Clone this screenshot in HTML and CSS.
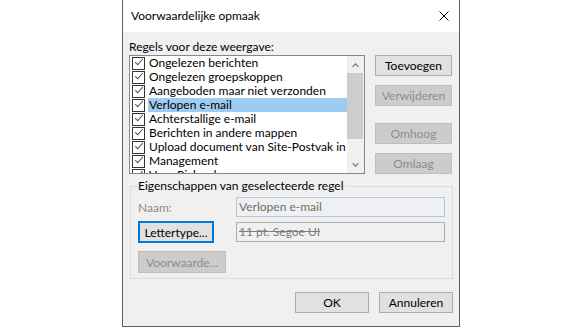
FILE: index.html
```html
<!DOCTYPE html>
<html lang="nl">
    <head>
        <meta charset="UTF-8">
        <meta name="viewport" content="width=device-width, initial-scale=1.0">
        <title>Voorwaardelijke opmaak</title>
        <link rel="stylesheet" href="styles.css">
    </head>
    <body>
        <div class="dialog">
            <div class="titlebar">
                <span class="title">Voorwaardelijke opmaak</span>
                <span class="close">
                    <svg width="10" height="10" viewBox="0 0 10 10">
                        <path d="M0.5 0.5 L9.5 9.5 M9.5 0.5 L0.5 9.5" stroke="#111" stroke-width="1" fill="none"/>
                    </svg>
                </span>
            </div>
            <div class="content">
                <div class="label">Regels voor deze weergave:</div>
                <div class="rules">
                    <div class="listbox">
                        <!-- One row for each rule in the view -->
                        <ul class="items">
                            <li class="item"><span class="check"></span><span class="name">Ongelezen berichten</span></li>
                            <li class="item"><span class="check"></span><span class="name">Ongelezen groepskoppen</span></li>
                            <li class="item"><span class="check"></span><span class="name">Aangeboden maar niet verzonden</span></li>
                            <li class="item selected"><span class="check"></span><span class="name">Verlopen e-mail</span></li>
                            <li class="item"><span class="check"></span><span class="name">Achterstallige e-mail</span></li>
                            <li class="item"><span class="check"></span><span class="name">Berichten in andere mappen</span></li>
                            <li class="item"><span class="check"></span><span class="name">Upload document van Site-Postvak in Postvak IN</span></li>
                            <li class="item"><span class="check"></span><span class="name">Management</span></li>
                            <li class="item"><span class="check"></span><span class="name">Voor Richard</span></li>
                        </ul>
                        <div class="scrollbar">
                            <div class="arrow">
                                <svg width="7" height="4" viewBox="0 0 7 4"><path d="M0 4 L3.5 0 L7 4 L5.8 4 L3.5 1.4 L1.2 4 Z" fill="#606060"/></svg>
                            </div>
                            <div class="track"><div class="thumb"></div></div>
                            <div class="arrow">
                                <svg width="7" height="4" viewBox="0 0 7 4"><path d="M0 0 L3.5 4 L7 0 L5.8 0 L3.5 2.6 L1.2 0 Z" fill="#606060"/></svg>
                            </div>
                        </div>
                    </div>
                    <div class="side-buttons">
                        <button class="btn">Toevoegen</button>
                        <button class="btn" disabled>Verwijderen</button>
                        <button class="btn move" disabled>Omhoog</button>
                        <button class="btn" disabled>Omlaag</button>
                    </div>
                </div>

                <fieldset class="group">
                    <legend>Eigenschappen van geselecteerde regel</legend>
                    <div class="field-row">
                        <span class="field-label">Naam:</span>
                        <span class="textbox">Verlopen e-mail</span>
                    </div>
                    <div class="field-row">
                        <button class="btn font-btn focused">Lettertype...</button>
                        <span class="preview">11 pt. Segoe UI</span>
                    </div>
                    <div class="field-row condition">
                        <button class="btn condition-btn" disabled>Voorwaarde...</button>
                    </div>
                </fieldset>

                <div class="footer">
                    <button class="btn footer-btn">OK</button>
                    <button class="btn footer-btn">Annuleren</button>
                </div>
            </div>
        </div>
    </body>
</html>
```

FILE: styles.css
```css
/* Page and font */
body {
    margin: 0;
    background-color: #fff;
    font-family: Lato, "Noto Sans", sans-serif;
    font-size: 12px;
    color: #000;
}

/* The dialog window */
.dialog {
    width: 338px;
    height: 327px;
    margin-left: 122px;
    box-sizing: border-box;
    border: 1px solid #5f5f5f;
    border-top: none;
    background-color: #f0f0f0;
    display: flex;
    flex-direction: column;
}

/* Title bar */
.titlebar {
    height: 32px;
    background-color: #fff;
    display: flex;
    justify-content: space-between;
    align-items: flex-start;
}

.title {
    padding: 8px 0 0 8px;
    line-height: 16px;
}

.close {
    display: flex;
    padding: 11px 10px 0 0;
}

/* Main content */
.content {
    padding: 0 6px;
}

.label {
    margin-top: 7px;
    line-height: 16px;
}

.rules {
    display: flex;
    gap: 10px;
}

/* Rules list */
.listbox {
    width: 236px;
    height: 119px;
    box-sizing: border-box;
    border: 1px solid #828790;
    background-color: #fff;
    display: flex;
    overflow: hidden;
}

.items {
    flex: 1;
    margin: 0;
    padding: 0;
    list-style: none;
    overflow: hidden;
    min-width: 0;
}

.item {
    height: 14px;
    display: flex;
    align-items: center;
    white-space: nowrap;
}

.check {
    position: relative;
    flex: none;
    width: 13px;
    height: 13px;
    box-sizing: border-box;
    margin-left: 2px;
    margin-right: 3px;
    border: 1px solid #333;
    background-color: #fff;
}

.check::after {
    content: "";
    position: absolute;
    left: 2px;
    top: 1px;
    width: 7px;
    height: 3px;
    border-left: 1px solid #444;
    border-bottom: 1px solid #444;
    transform: rotate(-48deg);
}

.name {
    flex: 1;
    padding-left: 1px;
    line-height: 14px;
    overflow: hidden;
}

.item.selected .name {
    background-color: #9dcbf1;
}

/* Scrollbar of the list */
.scrollbar {
    width: 17px;
    flex: none;
    display: flex;
    flex-direction: column;
    background-color: #f0f0f0;
}

.arrow {
    height: 17px;
    display: flex;
    align-items: center;
    justify-content: center;
}

.track {
    flex: 1;
}

.thumb {
    height: 66px;
    margin: 0 1px 0 0;
    background-color: #cdcdcd;
}

/* Buttons */
.btn {
    height: 21px;
    padding: 0;
    box-sizing: border-box;
    border: 1px solid #adadad;
    background-color: #e1e1e1;
    font-family: inherit;
    font-size: 12px;
    color: #000;
}

.btn:disabled {
    border-color: #bfbfbf;
    background-color: #cccccc;
    color: #8d8d8d;
}

.btn.focused {
    border: 2px solid #0078d7;
}

.side-buttons {
    width: 77px;
    display: flex;
    flex-direction: column;
    gap: 9px;
}

.side-buttons .move {
    margin-top: 8px;
}

/* Group with the selected rule */
.group {
    width: 323px;
    box-sizing: border-box;
    margin: 4px 0 0 1px;
    padding: 3px 7px 5px 7px;
    border: 1px solid #dcdcdc;
}

.group legend {
    padding: 0 2px 0 0;
    margin-left: 0;
    line-height: 16px;
}

.field-row {
    display: flex;
    align-items: center;
    justify-content: space-between;
    margin-bottom: 4px;
}

.field-row.condition {
    margin-top: 8px;
    margin-bottom: 0;
}

.field-label {
    color: #8a8a8a;
}

.textbox,
.preview {
    width: 209px;
    height: 20px;
    box-sizing: border-box;
    padding-left: 2px;
    line-height: 18px;
    background-color: #f0f0f0;
    color: #6d6d6d;
}

.textbox {
    border: 1px solid #a9c9e9;
}

.preview {
    border: 1px solid #adadad;
    text-decoration: line-through;
    color: #7d7d7d;
}

.font-btn {
    width: 76px;
    height: 22px;
}

.condition-btn {
    width: 88px;
    height: 22px;
}

/* OK and cancel */
.footer {
    display: flex;
    justify-content: flex-end;
    gap: 10px;
    margin-top: 13px;
}

.footer-btn {
    width: 74px;
}
```
